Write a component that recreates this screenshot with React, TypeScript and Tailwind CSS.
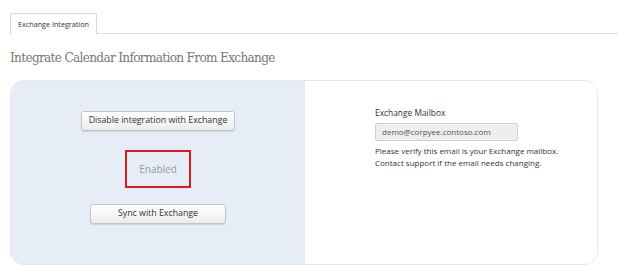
import React from 'react';

const btn =
    'h-[20px] rounded-[3px] border border-[#c4c4c4] bg-gradient-to-b from-white to-[#ececec] shadow-[0_1px_1px_rgba(0,0,0,0.12)] text-[8.8px] text-[#333] whitespace-nowrap flex items-center justify-center';

const App: React.FC = () => {
    return (
        <div className="w-[618px] h-[274px] bg-white pl-[10px] pt-[13px] font-['Open_Sans',sans-serif]">
            <div className="flex border-b border-[#dedede]">
                <div className="-mb-px h-[21px] w-[87px] rounded-t-[2px] border border-b-0 border-[#d8d8d8] bg-white flex items-center justify-center pt-[1px] text-[7.2px] text-[#333]">
                    Exchange Integration
                </div>
            </div>

            <h1 className="mt-[13px] h-[20px] text-[13.5px] leading-[20px] text-[#777] font-['DejaVu_Serif',serif] [font-stretch:condensed] tracking-[-0.7px]">
                Integrate Calendar Information From Exchange
            </h1>

            <div className="mt-[13px] w-[588px] h-[185px] rounded-[14px] border border-[#e6e6e6] flex overflow-hidden">
                <div className="w-[294px] bg-[#e6edf6] flex flex-col items-center pt-[30px]">
                    <button className={`${btn} w-[154px]`}>Disable integration with Exchange</button>
                    <div className="mt-[19px] w-[66px] h-[38px] border-2 border-[#e3161f] flex items-center justify-center text-[10px] text-[#999]">
                        Enabled
                    </div>
                    <button className={`${btn} mt-[16px] w-[136px]`}>Sync with Exchange</button>
                </div>

                <div className="flex-1 bg-white pl-[70px] pt-[26px]">
                    <div className="text-[8.4px] leading-[12px] text-[#333]">Exchange Mailbox</div>
                    <div className="mt-[4px] w-[143px] h-[18px] rounded-[2px] border border-[#cfcfcf] bg-[#eeeeee] pl-[6px] flex items-center text-[8px] text-[#555]">
                        demo@corpyee.contoso.com
                    </div>
                    <p className="mt-[4px] text-[8px] leading-[11.5px] text-[#333]">
                        Please verify this email is your Exchange mailbox.
                        <br />
                        Contact support if the email needs changing.
                    </p>
                </div>
            </div>
        </div>
    );
};

export default App;
